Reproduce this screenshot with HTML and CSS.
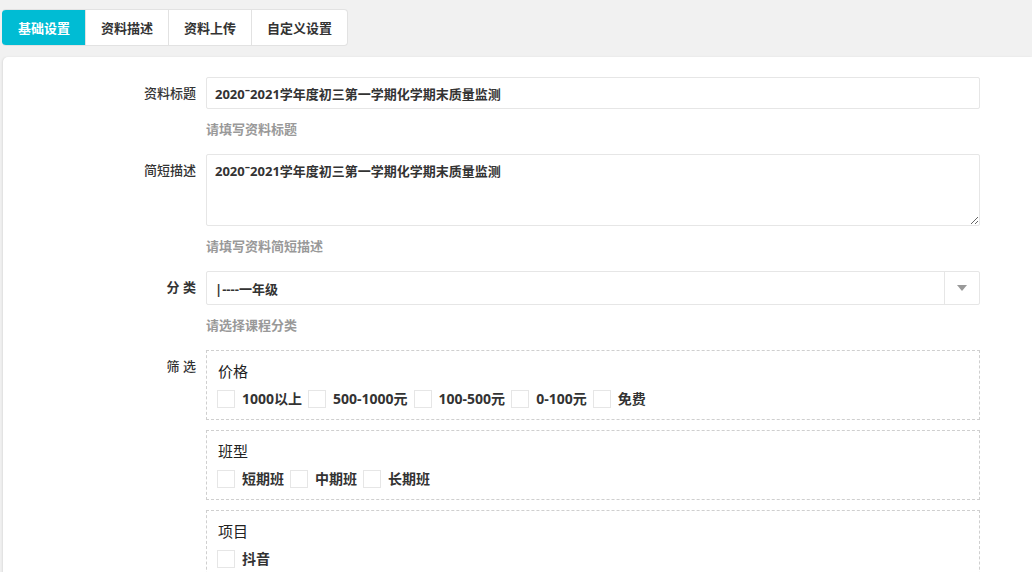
FILE: index.html
```html
<!DOCTYPE html>
<html lang="zh-CN">
<head>
<meta charset="utf-8">
<title>资料设置</title>
<link rel="stylesheet" href="styles.css">
</head>
<body>
<div class="page">
  <div class="tabs">
    <span class="tab active">基础设置</span>
    <span class="tab">资料描述</span>
    <span class="tab">资料上传</span>
    <span class="tab">自定义设置</span>
  </div>
  <div class="card">
    <form class="form">
      <div class="row">
        <label class="label">资料标题</label>
        <div class="field">
          <input class="input" type="text" value="2020ˉ2021学年度初三第一学期化学期末质量监测">
          <div class="help">请填写资料标题</div>
        </div>
      </div>
      <div class="row">
        <label class="label">简短描述</label>
        <div class="field">
          <textarea class="textarea">2020ˉ2021学年度初三第一学期化学期末质量监测</textarea>
          <div class="help">请填写资料简短描述</div>
        </div>
      </div>
      <div class="row">
        <label class="label label-strong">分 类</label>
        <div class="field">
          <div class="select">
            <span class="select-value">|----一年级</span>
            <span class="select-arrow"><span class="caret"></span></span>
          </div>
          <div class="help">请选择课程分类</div>
        </div>
      </div>
      <div class="row">
        <label class="label">筛 选</label>
        <div class="field">
          <div class="group">
            <div class="group-title">价格</div>
            <div class="checks">
              <span class="check"><span class="box"></span>1000以上</span>
              <span class="check"><span class="box"></span>500-1000元</span>
              <span class="check"><span class="box"></span>100-500元</span>
              <span class="check"><span class="box"></span>0-100元</span>
              <span class="check"><span class="box"></span>免费</span>
            </div>
          </div>
          <div class="group">
            <div class="group-title">班型</div>
            <div class="checks">
              <span class="check"><span class="box"></span>短期班</span>
              <span class="check"><span class="box"></span>中期班</span>
              <span class="check"><span class="box"></span>长期班</span>
            </div>
          </div>
          <div class="group">
            <div class="group-title">项目</div>
            <div class="checks">
              <span class="check"><span class="box"></span>抖音</span>
            </div>
          </div>
        </div>
      </div>
    </form>
  </div>
</div>
</body>
</html>
```

FILE: styles.css
```css
html, body {
  margin: 0;
  padding: 0;
  overflow: hidden;
  background: #f1f1f1;
  font-family: "Open Sans", "Noto Sans CJK SC", sans-serif;
  font-size: 13px;
  color: #333;
}

.page {
  padding: 9px 0 0 2px;
}

.tabs {
  display: inline-flex;
  height: 37px;
  background: #fff;
  border: 1px solid #e2e2e2;
  border-left: none;
  border-radius: 4px;
  box-sizing: border-box;
  overflow: hidden;
  margin-bottom: 11px;
}

.tab {
  display: flex;
  align-items: center;
  padding: 0 15px;
  font-weight: 700;
  color: #333;
  border-left: 1px solid #e2e2e2;
}

.tab.active {
  background: #00bcd4;
  color: #fff;
  border-left: none;
  padding: 0 15px 0 16px;
  margin: -1px 0;
  border-radius: 4px 0 0 4px;
}

.card {
  margin-left: 1px;
  background: #fff;
  border-radius: 5px 0 0 0;
  box-shadow: -1px 0 2px rgba(0, 0, 0, 0.08);
  padding: 20px 52px 40px 0;
  min-height: 560px;
}

.row {
  display: flex;
  align-items: flex-start;
}

.label {
  width: 203px;
  flex: none;
  box-sizing: border-box;
  padding-right: 10px;
  text-align: right;
  line-height: 32px;
  font-weight: 500;
  color: #333;
}

.label-strong {
  font-weight: 700;
}

.field {
  flex: 1;
  min-width: 0;
}

.input,
.textarea {
  display: block;
  width: 100%;
  box-sizing: border-box;
  border: 1px solid #e6e6e6;
  border-radius: 2px;
  padding: 0 8px;
  font-family: inherit;
  font-size: 13px;
  font-weight: 700;
  color: #333;
  background: #fff;
  outline: none;
  margin: 0;
}

.input {
  height: 32px;
}

.textarea {
  height: 72px;
  padding-top: 6px;
  line-height: 20px;
  resize: vertical;
}

.help {
  margin: 10px 0 15px;
  line-height: 20px;
  color: #999;
  font-weight: 700;
}

.select {
  display: flex;
  height: 34px;
  box-sizing: border-box;
  border: 1px solid #e6e6e6;
  border-radius: 2px;
}

.select-value {
  flex: 1;
  display: flex;
  align-items: center;
  padding-left: 8px;
  font-weight: 700;
}

.select-arrow {
  width: 34px;
  border-left: 1px solid #e6e6e6;
  display: flex;
  align-items: center;
  justify-content: center;
}

.caret {
  width: 0;
  height: 0;
  border-left: 5px solid transparent;
  border-right: 5px solid transparent;
  border-top: 6px solid #999;
}

.group {
  border: 1px dashed #cfcfcf;
  padding: 10px 10px 11px;
  margin-bottom: 10px;
}

.group-title {
  font-size: 15px;
  line-height: 20px;
  margin: 0 0 9px 1px;
  color: #222;
}

.checks {
  display: flex;
  align-items: center;
  height: 18px;
}

.check {
  display: inline-flex;
  align-items: center;
  margin-right: 6px;
  font-size: 14px;
  font-weight: 700;
  line-height: 18px;
}

.box {
  width: 18px;
  height: 18px;
  box-sizing: border-box;
  border: 1px solid #e6e6e6;
  background: #fff;
  margin-right: 7px;
}
```
